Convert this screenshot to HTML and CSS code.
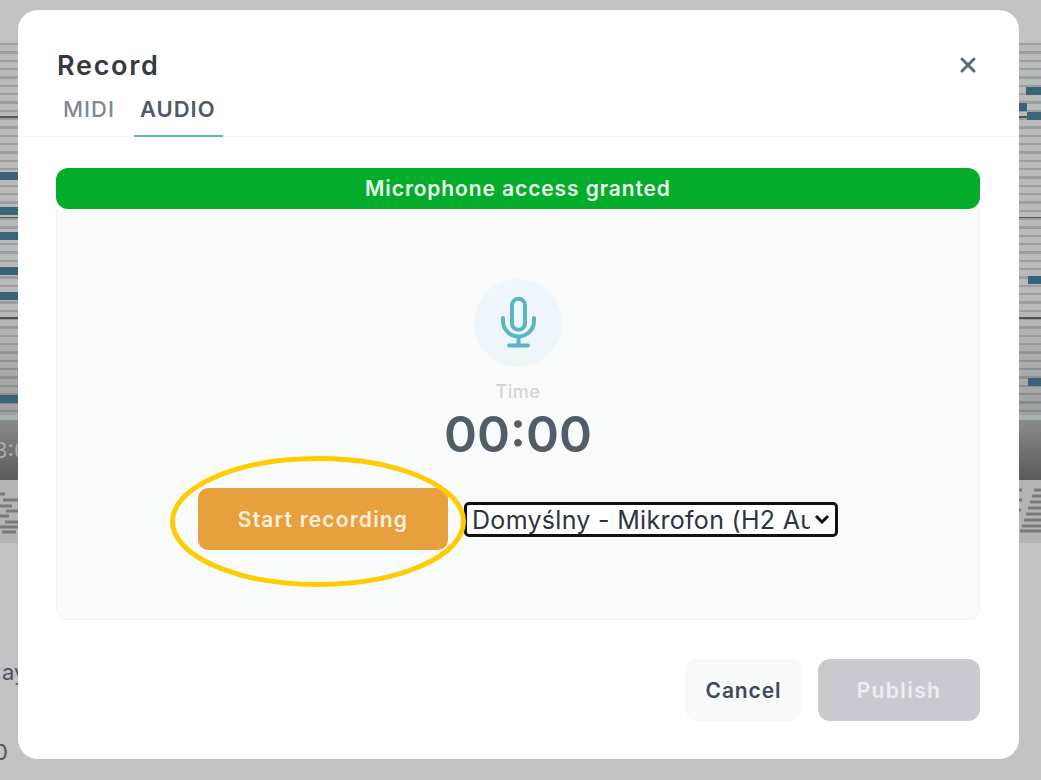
FILE: index.html
```html
<!DOCTYPE html>
<html lang="en">

<head>
    <meta charset="UTF-8">
    <meta name="viewport" content="width=device-width, initial-scale=1.0">
    <title>Record</title>
    <link rel="stylesheet" href="styles.css">
</head>

<body>
    <div class="backdrop">
        <div class="roll"></div>
        <div class="timeline"></div>
        <div class="wave">
            <svg class="wave-left" width="18" height="63" viewBox="0 0 18 63">
                <path d="M0 14h5M3 20h15M0 26h12M6 31h12M0 36h9M5 42h13M0 47h18M2 52h14" />
            </svg>
            <svg class="wave-right" width="22" height="63" viewBox="0 0 22 63">
                <path d="M15 10h7M13 16h9M11 22h11M9 28h13M7 34h15M5 40h17M3 46h19M1 51h21M0 10h3M0 20h3M0 30h2" />
            </svg>
        </div>
        <span class="note note-l" style="top: 172px"></span>
        <span class="note note-l" style="top: 207px"></span>
        <span class="note note-l" style="top: 232px"></span>
        <span class="note note-l" style="top: 267px"></span>
        <span class="note note-l" style="top: 292px"></span>
        <span class="note note-l" style="top: 395px"></span>
        <span class="note note-r" style="top: 87px; left: 1026px"></span>
        <span class="note note-r" style="top: 103px; left: 1019px; width: 8px"></span>
        <span class="note note-r" style="top: 112px; left: 1027px"></span>
        <span class="note note-r" style="top: 276px; left: 1028px"></span>
        <span class="note note-r" style="top: 378px; left: 1028px"></span>
        <span class="back-text back-time">3:0</span>
        <span class="back-text back-play">ay</span>
        <span class="back-text back-zero">0</span>
    </div>

    <main class="modal">
        <header class="modal-head">
            <div class="title-row">
                <h2>Record</h2>
                <button type="button" class="close" aria-label="Close">
                    <svg width="18" height="18" viewBox="0 0 18 18">
                        <path d="M3 3l12 12M15 3L3 15" />
                    </svg>
                </button>
            </div>
            <nav class="tabs">
                <a class="tab">MIDI</a>
                <a class="tab tab-active">AUDIO</a>
            </nav>
        </header>

        <section class="modal-body">
            <div class="status">Microphone access granted</div>
            <div class="panel">
                <div class="mic">
                    <svg width="88" height="88" viewBox="0 0 88 88">
                        <rect x="38" y="19.75" width="13" height="31" rx="6.5" />
                        <path d="M29 39v3a15.5 15.5 0 0 0 31 0v-3M44.5 58v8M35 66.5h19" />
                    </svg>
                </div>
                <div class="time-label">Time</div>
                <div class="time">00:00</div>
                <div class="controls">
                    <div class="start-wrap">
                        <button type="button" class="start">Start recording</button>
                        <svg class="circled" width="300" height="136" viewBox="0 0 300 136">
                            <ellipse cx="148" cy="67.5" rx="145.5" ry="63" />
                        </svg>
                    </div>
                    <select class="device">
                        <option>Domyślny - Mikrofon (H2 Audio)</option>
                    </select>
                </div>
            </div>
        </section>

        <footer class="modal-foot">
            <button type="button" class="btn btn-cancel">Cancel</button>
            <button type="button" class="btn btn-publish">Publish</button>
        </footer>
    </main>
</body>

</html>
```

FILE: styles.css
```css
* {
    padding: 0;
    margin: 0;
    box-sizing: border-box;
}

html,
body {
    height: 100%;
    overflow: hidden;
}

body {
    background-color: #c0c2c4;
    font-family: Inter, "Open Sans", sans-serif;
}

/* dimmed page behind the dialog */
.backdrop {
    position: absolute;
    inset: 0;
    overflow: hidden;
}

.roll {
    position: absolute;
    top: 43px;
    left: 0;
    right: 0;
    height: 372px;
    background:
        linear-gradient(180deg, transparent 70%, rgba(0, 0, 0, 0.14) 100%),
        repeating-linear-gradient(180deg, transparent 0, transparent 99px, #555 99px, #555 100.5px) 0 -26px,
        repeating-linear-gradient(180deg, #9c9ea0 0, #9c9ea0 2.4px, #b8babc 2.4px, #b8babc 8.33px);
}

.timeline {
    position: absolute;
    top: 415px;
    left: 0;
    right: 0;
    height: 65px;
    border-top: 5px solid #a9b0b2;
    background: linear-gradient(180deg, #8a8a8a, #595b5d);
}

.wave {
    position: absolute;
    top: 480px;
    left: 0;
    right: 0;
    height: 63px;
    background-color: #b3b4b5;
}

.wave svg {
    position: absolute;
    top: 0;
}

.wave path {
    fill: none;
    stroke: #77797b;
    stroke-width: 3;
}

.wave-left {
    left: 0;
}

.wave-right {
    right: 0;
}

.note {
    position: absolute;
    height: 8px;
    background-color: #396477;
}

.note-l {
    left: 0;
    width: 18px;
}

.note-r {
    width: 20px;
}

.back-text {
    position: absolute;
    left: 0;
    color: #4a5560;
    font-size: 22px;
}

.back-time {
    top: 437px;
    left: -6px;
    color: #a9acae;
}

.back-play {
    top: 659px;
    left: 2px;
}

.back-zero {
    top: 739px;
    left: -6px;
}

.modal {
    position: absolute;
    top: 10px;
    left: 18px;
    width: 1001px;
    height: 749px;
    display: flex;
    flex-direction: column;
    background-color: white;
    border-radius: 20px;
}

.modal-head {
    height: 127px;
    padding: 38px 38px 0 39px;
    border-bottom: 1px solid #f3f5f6;
}

.title-row {
    display: flex;
    justify-content: space-between;
    align-items: center;
    height: 34px;
}

h2 {
    font-size: 27px;
    font-weight: 600;
    color: #343a43;
    letter-spacing: 1.7px;
}

.close {
    width: 24px;
    height: 24px;
    display: flex;
    justify-content: center;
    align-items: center;
    border: none;
    background: none;
    margin-right: 1px;
}

.close path {
    fill: none;
    stroke: #5d6974;
    stroke-width: 3;
    stroke-linecap: round;
}

.tabs {
    display: flex;
    margin-top: 1px;
}

.tab {
    height: 54px;
    padding: 13px 6px 0;
    margin-right: 13px;
    font-size: 22px;
    font-weight: 500;
    letter-spacing: 1px;
    color: #7d8994;
}

.tab-active {
    padding: 13px 7px 0 6px;
    color: #4e5a66;
    font-weight: 600;
    border-bottom: 2px solid #58b7c4;
}

.modal-body {
    padding: 31px 39px 0 38px;
}

.status {
    height: 41px;
    line-height: 41px;
    text-align: center;
    font-size: 21px;
    font-weight: 600;
    letter-spacing: 0.9px;
    color: #e9f8ea;
    background-color: #03ac2b;
    border-radius: 12px;
}

.panel {
    height: 411px;
    padding-top: 70px;
    display: flex;
    flex-direction: column;
    align-items: center;
    background-color: #f9fbfb;
    border: 1px solid #f2f4f4;
    border-top: none;
    border-radius: 0 0 12px 12px;
}

.mic {
    width: 88px;
    height: 88px;
    border-radius: 50%;
    background-color: #eef6fa;
}

.mic svg {
    display: block;
}

.mic rect,
.mic path {
    fill: none;
    stroke: #5ab6c4;
    stroke-width: 4;
    stroke-linecap: round;
}

.time-label {
    margin-top: 14px;
    font-size: 18px;
    font-weight: 500;
    letter-spacing: 0.5px;
    color: #d0d5d9;
}

.time {
    margin-top: 2px;
    font-size: 50px;
    font-weight: 600;
    line-height: 60px;
    color: #535d67;
}

.controls {
    align-self: flex-start;
    margin: 24px 0 0 141px;
    display: flex;
    align-items: center;
    gap: 16px;
}

.start-wrap {
    position: relative;
}

.start {
    display: block;
    width: 250px;
    height: 62px;
    border: none;
    border-radius: 10px;
    background-color: #e8a03e;
    color: #fdf0dc;
    font-family: inherit;
    font-size: 21px;
    font-weight: 600;
    letter-spacing: 1.2px;
}

.circled {
    position: absolute;
    top: -34px;
    left: -28px;
    pointer-events: none;
}

.circled ellipse {
    fill: none;
    stroke: #ffcc00;
    stroke-width: 5;
}

.device {
    appearance: none;
    width: 374px;
    height: 35px;
    padding: 0 25px 0 5px;
    font-family: inherit;
    font-size: 25px;
    letter-spacing: 0.3px;
    color: #2c3440;
    background: white url("data:image/svg+xml,%3Csvg xmlns='http://www.w3.org/2000/svg' width='16' height='10'%3E%3Cpath d='M2 2l6 6 6-6' fill='none' stroke='%23111' stroke-width='3'/%3E%3C/svg%3E") no-repeat right 5px center;
    border: 3px solid #111;
    border-radius: 5px;
}

.modal-foot {
    display: flex;
    justify-content: flex-end;
    gap: 16px;
    padding: 39px 39px 0 0;
}

.btn {
    height: 62px;
    border: none;
    border-radius: 12px;
    font-family: inherit;
    font-size: 21px;
    font-weight: 600;
}

.btn-cancel {
    width: 117px;
    letter-spacing: 0.9px;
    background-color: #f8fafa;
    color: #414a54;
}

.btn-publish {
    width: 162px;
    letter-spacing: 1.4px;
    background-color: #c7cbcf;
    color: #eaeef1;
}
```
